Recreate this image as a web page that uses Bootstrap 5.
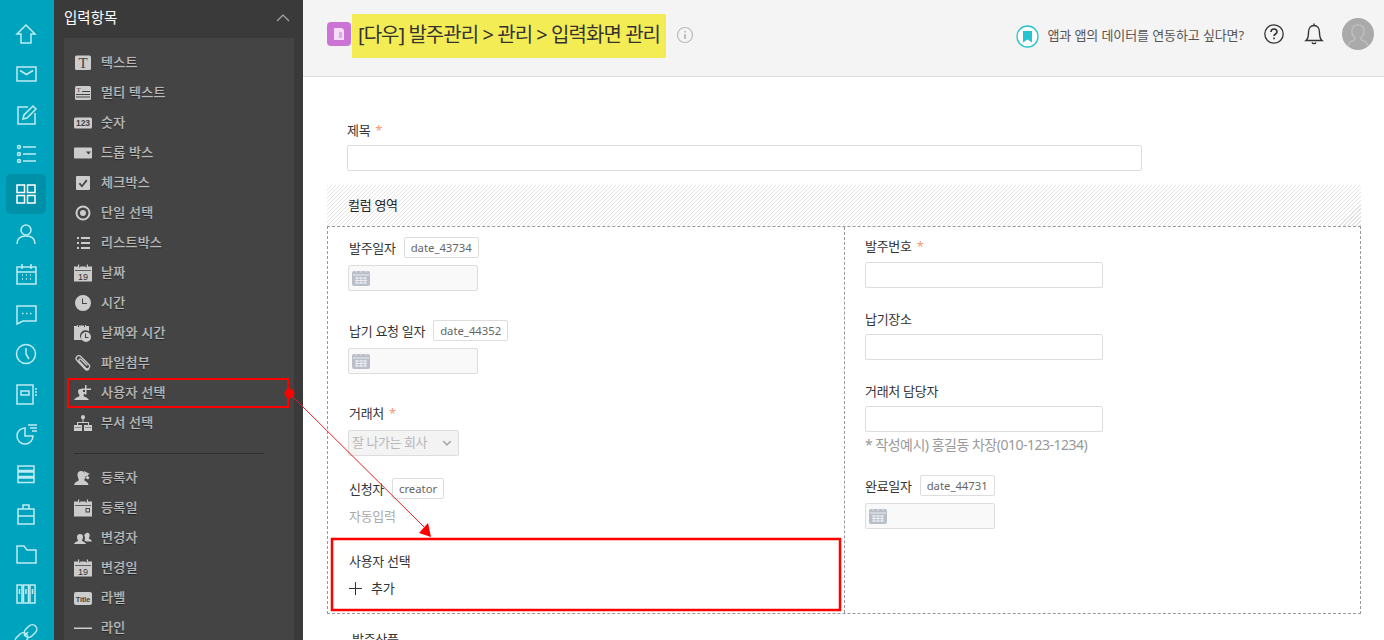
<!DOCTYPE html>
<html lang="ko">
<head>
<meta charset="utf-8">
<title>입력화면 관리</title>
<link href="https://cdn.jsdelivr.net/npm/bootstrap@5.3.0/dist/css/bootstrap.min.css" rel="stylesheet">
<style>
html,body{height:640px;overflow:hidden}
body{position:relative;font-family:"Noto Sans","Noto Sans CJK KR",sans-serif;font-size:13px;color:#333;letter-spacing:-.3px;background:#fff}
.rail{width:54px;background:#00a3bd;padding-top:14px;flex:none}
.rail-btn{width:40px;height:40px;margin-left:6px;border-radius:5px;flex:none}
.rail-btn svg{width:24px;height:24px;fill:none;stroke:#bfecf2;stroke-width:1.5}
.rail-btn.on{background:#0090a8}
.rail-btn.on svg{stroke:#fff}
.panel{width:249px;background:#3a3a3a;flex:none}
.panel-head{height:38px;padding:0 13px 2px 10px;color:#fff;font-size:14.5px;letter-spacing:0}
.panel-body{margin:0 9px 0 10px;background:#444;padding-top:10px;height:602px}
.fitem{height:30px;padding-left:10px;color:#b8b8b8;gap:9px;text-shadow:0 1px 1px #222,0 0 1px #999;letter-spacing:.25px;font-weight:500}
.fitem svg{width:18px;height:18px;flex:none;fill:#ccc}
.fitem text{text-shadow:none;letter-spacing:0}
.icon-num{font:700 8.5px "Liberation Sans",sans-serif;fill:#444}
.icon-t{font:400 15px "Liberation Serif",serif;fill:#444}
.icon-ts{font:400 7px "Liberation Serif",serif;fill:#444}
.icon-day{font:400 9px "Liberation Sans",sans-serif;fill:#333}
.icon-lab{font:700 7.2px "Liberation Sans",sans-serif;fill:#444}
.fsep{border-top:1px solid #2e2e2e;margin:15px 30px 9px 10px}
.topbar{height:77px;background:#f4f4f4;border-bottom:1px solid #ddd;padding:0 10px 4px 24px;flex:none}
.app-ico{width:24px;height:24px;background:#cc74d6;border-radius:4px;margin:0 1px 4px 0}
.hilite{background:#f4ec55;height:44px;padding:0 6px 2px;font-size:20px;color:#333;letter-spacing:-.95px}
.info-ico{width:18px;height:18px;margin:0 0 2px 10px}
.link-txt{color:#555;margin:0 20px 0 8px;font-size:13px;letter-spacing:-.1px}
.ico-help{margin-bottom:4px}
.ico-bell{margin:0 18px 4px 20px}
.ico-user{margin-bottom:4px}
.content{padding:0 23px 0 24px}
.flbl{color:#333;line-height:18px}
.req{color:#f59a7a;margin-left:5px}
.title-fld{padding:44px 219px 0 20px}
.title-lbl{margin-bottom:6px}
.fctl.form-control{height:26px;border:1px solid #ddd;border-radius:2px;padding:0 6px;min-height:0}
.col-zone{height:41px;margin-top:14px;padding-left:21px;color:#222;background:repeating-linear-gradient(135deg,#e4e4e4 0,#e4e4e4 1px,#fff 1px,#fff 2.83px)}
.col-box{height:388px;border:1px dashed #999}
.col-left{width:517px;border-right:1px dashed #999;padding:10px 0 0 21px;flex:none}
.col-right{padding:10px 0 0 20px}
.tagbox{border:1px solid #ddd;border-radius:2px;height:21px;line-height:19px;padding:0 6px;font-size:11.3px;color:#666;margin-left:8px;background:#fff;letter-spacing:0}
.lblrow{height:21px}
.datebox{width:130px;height:26px;background:#f9f9f9;border:1px solid #ddd;border-radius:2px;padding-left:3px;margin-left:-1px}
.col-right .datebox{margin-left:0}
.datebox svg{width:18px;height:18px}
.gap-a{margin-top:7px}
.gap-b{margin-top:29px}
.gap-c{margin-top:30px}
.gap-d{margin-top:8px}
.gap-e{margin-top:22px}
.gap-f{margin-top:27px}
.gap-h{margin-top:20px}
.gap-i{margin-top:6px}
.gap-j{margin-top:7px}
.sel.form-select{width:111px;height:26px;margin-left:-1px;padding:0 0 0 3px;background-color:#f3f3f3;border:1px solid #ddd;border-radius:2px;font-size:13px;color:#b8b8b8;letter-spacing:-.45px;min-height:0;background-position:right 5px center;background-size:12px 10px;background-image:url("data:image/svg+xml,%3csvg xmlns='http://www.w3.org/2000/svg' viewBox='0 0 16 16'%3e%3cpath fill='none' stroke='%23aaa' stroke-width='2.500' d='m2 5 6 6 6-6'/%3e%3c/svg%3e")}
.auto-txt{color:#aaa;margin-top:8px}
.plus-row{gap:9px;color:#333;margin-top:9px}
.w238{width:238px}
.hint{color:#999;font-size:14px;margin-top:2px;letter-spacing:-.5px}
.below{padding:16px 0 0 25px}
.notes{position:absolute;left:0;top:0;width:1384px;height:640px;pointer-events:none}
</style>
</head>
<body class="d-flex">

<nav class="rail d-flex flex-column">
  <div class="rail-btn d-flex align-items-center justify-content-center"><svg viewBox="0 0 24 24"><path d="M12 3 3 12h4v9h10v-9h4z"/></svg></div>
  <div class="rail-btn d-flex align-items-center justify-content-center"><svg viewBox="0 0 24 24"><rect x="3" y="5" width="19" height="14"/><path d="m6 8.500 6.500 4 6.500-4"/></svg></div>
  <div class="rail-btn d-flex align-items-center justify-content-center"><svg viewBox="0 0 24 24"><path d="M14 5H4v17h17V11"/><path d="M9 17l1-4 9-9 3 3-9 9z"/></svg></div>
  <div class="rail-btn d-flex align-items-center justify-content-center"><svg viewBox="0 0 24 24"><circle cx="5" cy="5" r="1.500"/><circle cx="5" cy="12" r="1.500"/><circle cx="5" cy="19" r="1.500"/><path d="M9 5h13M9 12h13M9 19h13"/></svg></div>
  <div class="rail-btn on d-flex align-items-center justify-content-center"><svg viewBox="0 0 24 24"><rect x="3" y="3" width="7.500" height="7.500"/><rect x="13.500" y="3" width="7.500" height="7.500"/><rect x="3" y="13.500" width="7.500" height="7.500"/><rect x="13.500" y="13.500" width="7.500" height="7.500"/></svg></div>
  <div class="rail-btn d-flex align-items-center justify-content-center"><svg viewBox="0 0 24 24"><circle cx="12" cy="8" r="5"/><path d="M3 22c0-6 4-8 9-8s9 2 9 8"/></svg></div>
  <div class="rail-btn d-flex align-items-center justify-content-center"><svg viewBox="0 0 24 24"><rect x="3" y="5" width="19" height="17"/><path d="M3 10h19M8 2v5M17 2v5M8 13h1M12 13h1M16 13h1M8 17h1M12 17h1M16 17h1"/></svg></div>
  <div class="rail-btn d-flex align-items-center justify-content-center"><svg viewBox="0 0 24 24"><path d="M3 4h19v15H9l-6 3z"/><path d="M8 11.500h1.500M12 11.500h1.500M16 11.500h1.500"/></svg></div>
  <div class="rail-btn d-flex align-items-center justify-content-center"><svg viewBox="0 0 24 24"><circle cx="12" cy="12" r="9.500"/><path d="M12 6v6l3 5"/></svg></div>
  <div class="rail-btn d-flex align-items-center justify-content-center"><svg viewBox="0 0 24 24"><path d="M19 3H3v19h16zM23 7h-2M23 10h-2M23 13h-2"/><rect x="7" y="9" width="8" height="4"/></svg></div>
  <div class="rail-btn d-flex align-items-center justify-content-center"><svg viewBox="0 0 24 24"><path d="M11 6a8 8 0 1 0 8 8h-8zM14 3h9M16 6h7M18 9h5"/></svg></div>
  <div class="rail-btn d-flex align-items-center justify-content-center"><svg viewBox="0 0 24 24"><path d="M4 4h16v4.500H4zM4 10h16v4.500H4zM4 16h16v4.500H4z"/></svg></div>
  <div class="rail-btn d-flex align-items-center justify-content-center"><svg viewBox="0 0 24 24"><rect x="4" y="7" width="16" height="15"/><path d="M9 7V3h6v4M4 14h16"/></svg></div>
  <div class="rail-btn d-flex align-items-center justify-content-center"><svg viewBox="0 0 24 24"><path d="M3 21V4h7l3 4h9v13z"/></svg></div>
  <div class="rail-btn d-flex align-items-center justify-content-center"><svg viewBox="0 0 24 24"><rect x="3" y="3" width="5" height="18"/><rect x="9.500" y="3" width="5" height="18"/><rect x="16" y="3" width="5" height="18"/><path d="M5.500 7v5M12 7v5M18.500 7v5"/></svg></div>
  <div class="rail-btn d-flex align-items-center justify-content-center"><svg viewBox="0 0 24 24"><path d="M10 14l4-4"/><rect x="12" y="2" width="9" height="14" rx="4.500" transform="rotate(45 16.500 9)"/><rect x="3" y="10" width="9" height="14" rx="4.500" transform="rotate(45 7.500 17)"/></svg></div>
</nav>

<aside class="panel">
  <div class="panel-head d-flex align-items-center justify-content-between">
    <span>입력항목</span>
    <svg width="14" height="8" viewBox="0 0 14 8" fill="none" stroke="#aaa" stroke-width="1.200"><path d="m1 7 6-6 6 6"/></svg>
  </div>
  <div class="panel-body">
    <div class="fitem d-flex align-items-center"><svg viewBox="0 0 18 18"><rect x="1" y="1.500" width="16" height="14.500" rx="1.500"/><text class="icon-t" x="9" y="14" text-anchor="middle">T</text></svg><span>텍스트</span></div>
    <div class="fitem d-flex align-items-center"><svg viewBox="0 0 18 18"><rect x="1" y="2" width="16" height="14" rx="1.500"/><text class="icon-ts" x="2.500" y="8">T</text><path d="M8 7h8v1H8zM2 10h14v1H2zM2 12.500h14v1H2z" fill="#444"/></svg><span>멀티 텍스트</span></div>
    <div class="fitem d-flex align-items-center"><svg viewBox="0 0 18 18"><rect x="0" y="3.500" width="18" height="11" rx="1.500"/><text class="icon-num" x="9" y="12" text-anchor="middle">123</text></svg><span>숫자</span></div>
    <div class="fitem d-flex align-items-center"><svg viewBox="0 0 18 18"><path fill-rule="evenodd" d="M1 3.500h16a1 1 0 0 1 1 1v9a1 1 0 0 1-1 1H1a1 1 0 0 1-1-1v-9a1 1 0 0 1 1-1zm11 4 2.500 3 2.500-3z"/></svg><span>드롭 박스</span></div>
    <div class="fitem d-flex align-items-center"><svg viewBox="0 0 18 18"><path fill-rule="evenodd" d="M3 2h12a1 1 0 0 1 1 1v12a1 1 0 0 1-1 1H3a1 1 0 0 1-1-1V3a1 1 0 0 1 1-1zm9 3.500L8 11 6 8.500 4.800 10 8 13.500l5.500-6.700z"/></svg><span>체크박스</span></div>
    <div class="fitem d-flex align-items-center"><svg viewBox="0 0 18 18"><path fill-rule="evenodd" d="M9 1.500a7.500 7.500 0 1 1 0 15 7.500 7.500 0 0 1 0-15zm0 2a5.500 5.500 0 1 0 0 11 5.500 5.500 0 0 0 0-11zM9 6a3 3 0 1 1 0 6 3 3 0 0 1 0-6z"/></svg><span>단일 선택</span></div>
    <div class="fitem d-flex align-items-center"><svg viewBox="0 0 18 18"><path d="M3 3h2v2H3zM7 3h9v2H7zM3 8h2v2H3zM7 8h9v2H7zM3 13h2v2H3zM7 13h9v2H7z"/></svg><span>리스트박스</span></div>
    <div class="fitem d-flex align-items-center"><svg viewBox="0 0 18 18"><path d="M4 .5h1.200v3h1V2.500h5.600v1h1v-3H14v2h4V17.500H0V2.500h4z"/><path d="M1 6.200h16v.800H1z" fill="#444"/><text class="icon-day" x="9" y="15.500" text-anchor="middle">19</text></svg><span>날짜</span></div>
    <div class="fitem d-flex align-items-center"><svg viewBox="0 0 18 18"><path fill-rule="evenodd" d="M9 1a8 8 0 1 1 0 16A8 8 0 0 1 9 1zm0 3.500H8V10h5V9H9z"/></svg><span>시간</span></div>
    <div class="fitem d-flex align-items-center"><svg viewBox="0 0 18 18"><path fill-rule="evenodd" d="M3 1h1v2h1V1.500h5V3h1V1h1v1h3v5.500a5.500 5.500 0 0 0-7 8.500H0V2h3zm9 7a5 5 0 1 1 0 10 5 5 0 0 1 0-10zm0 1.500h-1V14h3.500v-1H12z"/></svg><span>날짜와 시간</span></div>
    <div class="fitem d-flex align-items-center"><svg viewBox="0 0 18 18" style="fill:none;stroke:#ccc;stroke-width:1.300"><path d="M15 15c-1.500 1.500-3 1-4 0L3 6.500C1.500 5 2 3.500 3 2.500s2.700-1.200 4 .2l8 8c1 1 .800 2.500-.200 3.500s-2.300.6-3-.1L5.500 7.500c-.800-.9-.8-1.600-.200-2.200s1.300-.4 1.900.2l6 6"/></svg><span>파일첨부</span></div>
    <div class="fitem d-flex align-items-center"><svg viewBox="0 0 18 18"><path d="M6 5h3v3h2.500c-.300 1-.900 2-1.800 2.700-.200.500-.200 1.300.300 1.800 1.800.8 4 1.300 5 3.500H0c1-2.200 3.200-2.700 5-3.500.5-.5.500-1.300.300-1.800C4.400 10 4 8 4 7c0-1 1-2 2-2zM11 1h1.500v3.500H17V6h-4.500v4.500H11V6H7.500V4.500H11z"/></svg><span>사용자 선택</span></div>
    <div class="fitem d-flex align-items-center"><svg viewBox="0 0 18 18"><path fill-rule="evenodd" d="M9 1a2.200 2.200 0 0 1 .500 4.300V8H15v3h3v6H10v-6h4V9H4v2h4v6H0v-6h3V8h5.500V5.300A2.200 2.200 0 0 1 9 1zM1 13.500V14h6v-.5zm10 0v.5h6v-.5z"/></svg><span>부서 선택</span></div>
    <div class="fsep"></div>
    <div class="fitem d-flex align-items-center"><svg viewBox="0 0 18 18"><path d="M7 2c1.500 0 2.500.5 3 1.500L11.500 9l1-1.500 2.500 2-1 1-2.500-1.500-1 1c-.300.5-.300 1.300.500 2 1.500.6 3 1.500 3.500 4H0c.5-2.500 2.500-3.400 4-4 .800-.7.800-1.500.500-2C3.700 8.500 3.500 7 3.500 5.500 3.500 3.500 5 2 7 2zM10 2l6 3-2.500 1 2 3-1 .7-2-3L11 8z"/></svg><span>등록자</span></div>
    <div class="fitem d-flex align-items-center"><svg viewBox="0 0 18 18"><path d="M4 .5h1.200v3h1V2.500h5.600v1h1v-3H14v2h4V17.500H0V2.500h4z"/><path d="M1 6.200h16v.800H1z" fill="#444"/><path fill="#444" fill-rule="evenodd" d="M11.500 9h4.500v4.500h-4.500zm1 1v2.500h2.500V10z"/></svg><span>등록일</span></div>
    <div class="fitem d-flex align-items-center"><svg viewBox="0 0 18 18"><path d="M6 5a3 3 0 0 1 3 3c0 1.500-.500 2.500-1 3.200 0 .5.200.8.600 1 1.500.5 2.900 1 3.400 2.800H0c.5-1.800 2-2.300 3.400-2.800.4-.2.600-.5.600-1C3.500 10.500 3 9.500 3 8a3 3 0 0 1 3-3zM13 3.500A2.700 2.700 0 0 1 15.700 6c0 1.500-.400 2.300-.900 3 0 .5.200.8.500 1 1.100.4 2.200.8 2.700 2.500h-5.500c-.600-.500-1.500-.9-2-1.100.3-.6.500-1.300.5-2.400 0-1-.300-2-.800-2.600.3-1.300 1.500-2.400 2.800-2.400z"/></svg><span>변경자</span></div>
    <div class="fitem d-flex align-items-center"><svg viewBox="0 0 18 18"><path d="M4 .5h1.200v3h1V2.500h5.600v1h1v-3H14v2h4V17.500H0V2.500h4z"/><path d="M1 6.200h16v.800H1z" fill="#444"/><text class="icon-day" x="9" y="15.500" text-anchor="middle">19</text></svg><span>변경일</span></div>
    <div class="fitem d-flex align-items-center"><svg viewBox="0 0 18 18"><rect x="0" y="3" width="18" height="13" rx="2"/><text class="icon-lab" x="9" y="12.500" text-anchor="middle">Title</text></svg><span>라벨</span></div>
    <div class="fitem d-flex align-items-center"><svg viewBox="0 0 18 18"><path d="M0 8.500h18v1.500H0z"/></svg><span>라인</span></div>
  </div>
</aside>

<main class="flex-grow-1 d-flex flex-column">
  <header class="topbar d-flex align-items-center">
    <div class="app-ico d-flex align-items-center justify-content-center">
      <svg width="12" height="14" viewBox="0 0 12 14"><path fill="#f5dcf8" d="M1 1h8l2 2v10H1z"/><path stroke="#cc74d6" d="M6 6h3M6 8h3M6 10h3"/></svg>
    </div>
    <div class="hilite d-flex align-items-center">[다우] 발주관리 &gt; 관리 &gt; 입력화면 관리</div>
    <svg class="info-ico" viewBox="0 0 18 18" fill="none" stroke="#bbb" stroke-width="1.200"><circle cx="9" cy="9" r="7.500"/><path stroke-width="1.800" d="M9 8v5M9 5v1.600"/></svg>
    <div class="ms-auto d-flex align-items-center">
      <svg width="23" height="23" viewBox="0 0 23 23"><circle cx="11.500" cy="11.500" r="10.500" fill="#fff" stroke="#26c3d0" stroke-width="1.300"/><path fill="#26c3d0" d="M7 6h9v11.500l-4.500-3-4.500 3z"/></svg>
      <span class="link-txt">앱과 앱의 데이터를 연동하고 싶다면?</span>
      <svg class="ico-help" width="20" height="20" viewBox="0 0 20 20" fill="none" stroke="#333" stroke-width="1.300"><circle cx="10" cy="10" r="9.200"/><path stroke-width="1.600" d="M7 8c0-4 6-4 6 0 0 2-3 2-3 4M10 13.500v1.800"/></svg>
      <svg class="ico-bell" width="20" height="24" viewBox="0 0 20 24" fill="none" stroke="#333" stroke-width="1.400"><path d="M2 18.500c2-1.500 2.500-3 2.500-8C4.500 6 7 3.500 10 3.500s5.500 2.500 5.500 7c0 5 .5 6.500 2.500 8zM10 1.500v2M8 20.500c.500 1.500 3.500 1.500 4 0"/></svg>
      <svg class="ico-user" width="32" height="32" viewBox="0 0 32 32"><circle cx="16" cy="16" r="16" fill="#aaa"/><path fill="none" stroke="#bdbdbd" stroke-width="1.500" d="M6 28c1-5 5-5 7-6.500v-2c-2-1.500-3.500-4-3-8 .5-3 3-4.500 6-4.500s5.500 1.500 6 4.500c.5 4-1 6.500-3 8v2c2 1.500 6 1.500 7 6.500"/></svg>
    </div>
  </header>

  <section class="content">
    <div class="title-fld">
      <div class="flbl title-lbl">제목<span class="req">*</span></div>
      <input class="form-control fctl" type="text" aria-label="제목">
    </div>
    <div class="col-zone d-flex align-items-center">컬럼 영역</div>
    <div class="col-box d-flex">
      <div class="col-left">
        <div class="lblrow d-flex align-items-center"><span class="flbl">발주일자</span><span class="tagbox">date_43734</span></div>
        <div class="datebox gap-a d-flex align-items-center"><svg viewBox="0 0 18 18"><rect x="0" y="2" width="18" height="15" rx="2" fill="#b9bec8"/><path stroke="#eceef2" d="M4 .5v3M9 .5v3M14 .5v3M1 6h16M3 9h12M3 11.500h12M3 14h12M5 8v7M9 8v7M13 8v7"/></svg></div>
        <div class="lblrow gap-b d-flex align-items-center"><span class="flbl">납기 요청 일자</span><span class="tagbox">date_44352</span></div>
        <div class="datebox gap-a d-flex align-items-center"><svg viewBox="0 0 18 18"><rect x="0" y="2" width="18" height="15" rx="2" fill="#b9bec8"/><path stroke="#eceef2" d="M4 .5v3M9 .5v3M14 .5v3M1 6h16M3 9h12M3 11.500h12M3 14h12M5 8v7M9 8v7M13 8v7"/></svg></div>
        <div class="flbl gap-c">거래처<span class="req">*</span></div>
        <select class="form-select sel gap-d" disabled aria-label="거래처"><option>잘 나가는 회사</option></select>
        <div class="lblrow gap-e d-flex align-items-center"><span class="flbl">신청자</span><span class="tagbox">creator</span></div>
        <div class="flbl auto-txt">자동입력</div>
        <div class="flbl gap-f">사용자 선택</div>
        <div class="plus-row d-flex align-items-center"><svg width="13" height="13" viewBox="0 0 13 13" stroke="#333"><path d="M6.500 0v13M0 6.500h13"/></svg><span>추가</span></div>
      </div>
      <div class="col-right flex-grow-1">
        <div class="flbl">발주번호<span class="req">*</span></div>
        <input class="form-control fctl w238 gap-j" type="text" aria-label="발주번호">
        <div class="flbl gap-e">납기장소</div>
        <input class="form-control fctl w238 gap-i" type="text" aria-label="납기장소">
        <div class="flbl gap-e">거래처 담당자</div>
        <input class="form-control fctl w238 gap-i" type="text" aria-label="거래처 담당자">
        <div class="hint">* 작성예시) 홍길동 차장(010-123-1234)</div>
        <div class="lblrow gap-h d-flex align-items-center"><span class="flbl">완료일자</span><span class="tagbox">date_44731</span></div>
        <div class="datebox gap-a d-flex align-items-center"><svg viewBox="0 0 18 18"><rect x="0" y="2" width="18" height="15" rx="2" fill="#b9bec8"/><path stroke="#eceef2" d="M4 .5v3M9 .5v3M14 .5v3M1 6h16M3 9h12M3 11.500h12M3 14h12M5 8v7M9 8v7M13 8v7"/></svg></div>
      </div>
    </div>
    <div class="below flbl">발주상품</div>
  </section>
</main>

<svg class="notes" viewBox="0 0 1384 640" fill="none">
  <rect x="68" y="379" width="220" height="28" stroke="#f00" stroke-width="2"/>
  <rect x="332" y="539" width="508" height="71" stroke="#f00" stroke-width="2.500"/>
  <path d="M290 394 424 527" stroke="#e02020" stroke-width="1"/>
  <circle cx="289.500" cy="393.500" r="5" fill="#f00"/>
  <path d="M431 537 419 533 428 523z" fill="#f00"/>
</svg>

<script src="https://cdn.jsdelivr.net/npm/bootstrap@5.3.0/dist/js/bootstrap.bundle.min.js"></script>
</body>
</html>
